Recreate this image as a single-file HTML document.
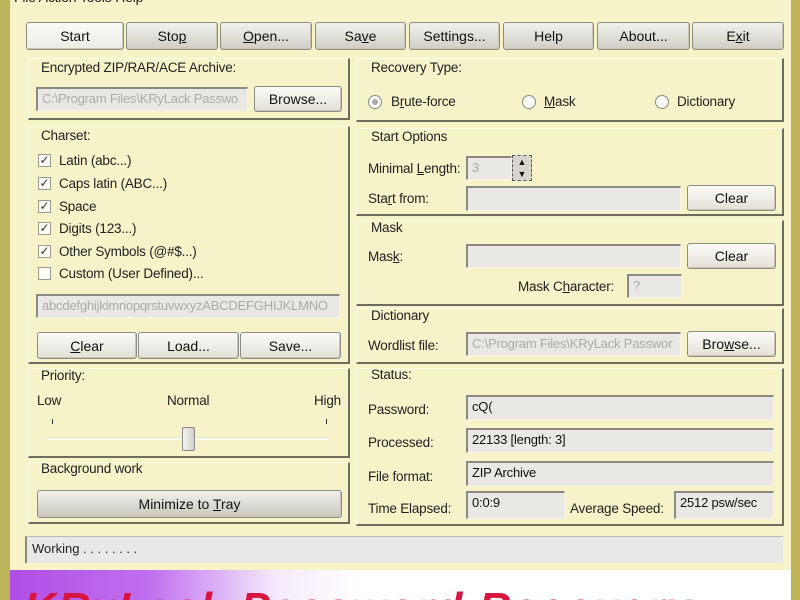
<!DOCTYPE html>
<html><head><meta charset="utf-8"><style>
*{box-sizing:border-box;margin:0;padding:0}
body{width:800px;height:600px;overflow:hidden;background:#f7f3c9;font-family:"Liberation Sans",sans-serif;font-size:13px;color:#111;position:relative}
.a{position:absolute}
.frame{left:0;top:0;width:10px;height:600px;background:#bdb45a}
.frameR{left:791px;top:0;width:9px;height:600px;background:#bdb45a}
.btn{position:absolute;background:linear-gradient(#fbfbf8,#e2e0d6);border:1px solid #8d8d86;border-radius:3px;text-align:center;font-size:14px;color:#111;box-shadow:inset -1px -1px 0 #c9c6b8}
.tb{top:22px;height:28px;line-height:27px;background:linear-gradient(#f2f2ee,#cfcdc4)}
.grp{position:absolute;border:1px solid #fffde8;border-right:2px solid #6e6c5e;border-bottom:2px solid #6e6c5e;background:#f7f3c9}
.lbl{position:absolute;font-size:13.5px;color:#222;white-space:nowrap;letter-spacing:-0.2px}
.edit{position:absolute;background:#e9e8e4;border-top:2px solid #8a8a84;border-left:2px solid #8a8a84;border-bottom:1px solid #f5f5f0;border-right:1px solid #f5f5f0;font-size:13px;color:#aaa;padding:2px 4px;white-space:nowrap;overflow:hidden;letter-spacing:-0.2px}
.val{color:#111}
.cb{position:absolute;width:13px;height:13px;border:1px solid #9a9a90;background:#fbfbf6;font-size:12px;line-height:11px;text-align:center;color:#333}
.rad{position:absolute;width:14px;height:14px;border:1px solid #8a8a84;border-radius:50%;background:#fafaf6}
u{text-decoration:underline}
</style></head><body>
<div class="a frame"></div><div class="a frameR"></div>
<div class="lbl" style="left:14px;top:-11px;font-size:14px">File Action Tools Help</div>

<div class="btn tb" style="left:26px;width:98px;background:linear-gradient(#fafaf8,#ecebe6)">Start</div>
<div class="btn tb" style="left:126px;width:92px">Sto<u>p</u></div>
<div class="btn tb" style="left:220px;width:92px"><u>O</u>pen...</div>
<div class="btn tb" style="left:315px;width:91px">Sa<u>v</u>e</div>
<div class="btn tb" style="left:409px;width:91px">Settings...</div>
<div class="btn tb" style="left:503px;width:91px">Help</div>
<div class="btn tb" style="left:597px;width:93px">About...</div>
<div class="btn tb" style="left:692px;width:92px">E<u>x</u>it</div>

<!-- Left column -->
<div class="grp" style="left:28px;top:58px;width:322px;height:62px"></div>
<div class="lbl" style="left:41px;top:60px">Encrypted ZIP/RAR/ACE Archive:</div>
<div class="edit" style="left:36px;top:87px;width:212px;height:24px">C:\Program Files\KRyLack Passwo</div>
<div class="btn" style="left:254px;top:86px;width:88px;height:26px;line-height:25px">Browse...</div>

<div class="grp" style="left:28px;top:126px;width:322px;height:238px"></div>
<div class="lbl" style="left:41px;top:128px">Charset:</div>
<div class="cb" style="left:38px;top:154px">✓</div><div class="lbl" style="left:59px;top:153px">Latin (abc...)</div>
<div class="cb" style="left:38px;top:177px">✓</div><div class="lbl" style="left:59px;top:176px">Caps latin (ABC...)</div>
<div class="cb" style="left:38px;top:200px">✓</div><div class="lbl" style="left:59px;top:199px">Space</div>
<div class="cb" style="left:38px;top:222px">✓</div><div class="lbl" style="left:59px;top:221px">Digits (123...)</div>
<div class="cb" style="left:38px;top:245px">✓</div><div class="lbl" style="left:59px;top:244px">Other Symbols (@#$...)</div>
<div class="cb" style="left:38px;top:267px"></div><div class="lbl" style="left:59px;top:266px">Custom (User Defined)...</div>
<div class="edit" style="left:36px;top:294px;width:304px;height:24px">abcdefghijklmnopqrstuvwxyzABCDEFGHIJKLMNO</div>
<div class="btn" style="left:37px;top:332px;width:100px;height:27px;line-height:26px"><u>C</u>lear</div>
<div class="btn" style="left:138px;top:332px;width:101px;height:27px;line-height:26px">Load...</div>
<div class="btn" style="left:240px;top:332px;width:101px;height:27px;line-height:26px">Save...</div>

<div class="grp" style="left:28px;top:368px;width:322px;height:90px"></div>
<div class="lbl" style="left:41px;top:368px">Priority:</div>
<div class="lbl" style="left:37px;top:393px">Low</div>
<div class="lbl" style="left:167px;top:393px">Normal</div>
<div class="lbl" style="left:314px;top:393px">High</div>
<div class="a" style="left:52px;top:419px;width:1px;height:5px;background:#333"></div>
<div class="a" style="left:326px;top:419px;width:1px;height:5px;background:#333"></div>
<div class="a" style="left:46px;top:437px;width:284px;height:3px;background:#fbfaee;border-top:1px solid #e8e6d0"></div>
<div class="a" style="left:182px;top:427px;width:13px;height:24px;border:1px solid #888;border-radius:2px;background:linear-gradient(90deg,#f4f4f0,#d0cfc8)"></div>

<div class="grp" style="left:28px;top:462px;width:322px;height:62px"></div>
<div class="lbl" style="left:41px;top:461px">Background work</div>
<div class="btn" style="left:37px;top:490px;width:305px;height:28px;line-height:27px;background:linear-gradient(#f0f0ec,#c9c7be)">Minimize to <u>T</u>ray</div>

<!-- Right column -->
<div class="grp" style="left:356px;top:58px;width:428px;height:64px"></div>
<div class="lbl" style="left:371px;top:60px">Recovery Type:</div>
<div class="rad" style="left:368px;top:95px"><div class="a" style="left:3px;top:3px;width:6px;height:6px;border-radius:50%;background:#aaa"></div></div>
<div class="lbl" style="left:391px;top:94px">B<u>r</u>ute-force</div>
<div class="rad" style="left:522px;top:95px"></div><div class="lbl" style="left:544px;top:94px"><u>M</u>ask</div>
<div class="rad" style="left:655px;top:95px"></div><div class="lbl" style="left:677px;top:94px">Dictionary</div>

<div class="grp" style="left:356px;top:128px;width:428px;height:88px"></div>
<div class="lbl" style="left:371px;top:129px">Start Options</div>
<div class="lbl" style="left:368px;top:161px">Minimal <u>L</u>ength:</div>
<div class="edit" style="left:466px;top:156px;width:46px;height:24px">3</div>
<div class="a" style="left:512px;top:155px;width:20px;height:26px;border:1px dashed #555;background:#d8d6cc;font-size:9px;text-align:center;line-height:12px">▲<br>▼</div>
<div class="lbl" style="left:368px;top:191px">Sta<u>r</u>t from:</div>
<div class="edit" style="left:466px;top:186px;width:215px;height:25px"></div>
<div class="btn" style="left:687px;top:185px;width:89px;height:26px;line-height:25px">Clear</div>

<div class="grp" style="left:356px;top:220px;width:428px;height:86px"></div>
<div class="lbl" style="left:371px;top:220px">Mask</div>
<div class="lbl" style="left:368px;top:249px">Mas<u>k</u>:</div>
<div class="edit" style="left:466px;top:244px;width:215px;height:24px"></div>
<div class="btn" style="left:687px;top:243px;width:89px;height:26px;line-height:25px">Clear</div>
<div class="lbl" style="left:518px;top:279px">Mask C<u>h</u>aracter:</div>
<div class="edit" style="left:627px;top:274px;width:55px;height:24px">?</div>

<div class="grp" style="left:356px;top:308px;width:428px;height:56px"></div>
<div class="lbl" style="left:371px;top:308px">Dictionary</div>
<div class="lbl" style="left:368px;top:338px">Wordlist file:</div>
<div class="edit" style="left:466px;top:332px;width:215px;height:24px">C:\Program Files\KRyLack Passwor</div>
<div class="btn" style="left:687px;top:331px;width:89px;height:26px;line-height:25px">Bro<u>w</u>se...</div>

<div class="grp" style="left:356px;top:368px;width:428px;height:158px"></div>
<div class="lbl" style="left:371px;top:367px">Status:</div>
<div class="lbl" style="left:368px;top:402px">Password:</div>
<div class="edit val" style="left:466px;top:395px;width:308px;height:25px">cQ(</div>
<div class="lbl" style="left:368px;top:435px">Processed:</div>
<div class="edit val" style="left:466px;top:428px;width:308px;height:25px">22133 [length: 3]</div>
<div class="lbl" style="left:368px;top:469px">File format:</div>
<div class="edit val" style="left:466px;top:461px;width:308px;height:25px">ZIP Archive</div>
<div class="lbl" style="left:368px;top:501px">Time Elapsed:</div>
<div class="edit val" style="left:466px;top:491px;width:99px;height:28px">0:0:9</div>
<div class="lbl" style="left:570px;top:501px">Average Speed:</div>
<div class="edit val" style="left:674px;top:491px;width:100px;height:28px">2512 psw/sec</div>

<div class="a" style="left:25px;top:536px;width:758px;height:27px;background:#e9e8e6;border-left:2px solid #888;border-top:1px solid #bbb;font-size:13px;padding:4px 5px;color:#222">Working . . . . . . . .</div>

<div class="a" style="left:10px;top:570px;width:781px;height:30px;background:linear-gradient(90deg,#b04ee6 0%,#c070ee 18%,#f4eafc 34%,#ffffff 45%,#fff 100%);overflow:hidden">
<div class="a" style="left:14px;top:14px;font-size:44px;font-weight:bold;font-style:italic;color:#d8153e;white-space:nowrap;letter-spacing:2px">KRyLack Password Recovery</div>
</div>
</body></html>
